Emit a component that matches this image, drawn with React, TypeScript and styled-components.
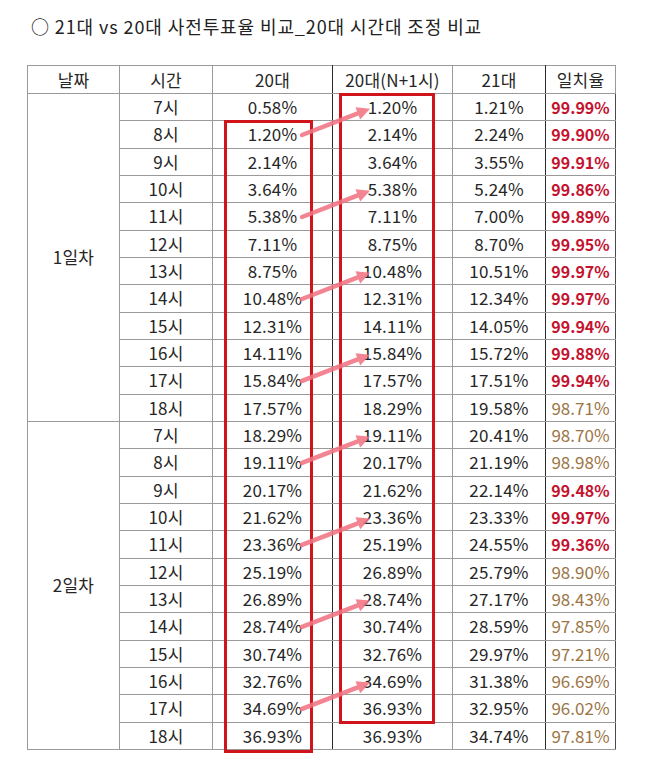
import React from "react";
import styled, { createGlobalStyle } from "styled-components";

const GlobalStyle = createGlobalStyle`
  body {
    margin: 0;
    background: #ffffff;
    font-family: "Noto Sans CJK KR", "Noto Sans", sans-serif;
    color: #222222;
  }
`;

type Row = [string, string, string, string, string];

const day1: Row[] = [
  ["7시", "0.58%", "1.20%", "1.21%", "99.99%"],
  ["8시", "1.20%", "2.14%", "2.24%", "99.90%"],
  ["9시", "2.14%", "3.64%", "3.55%", "99.91%"],
  ["10시", "3.64%", "5.38%", "5.24%", "99.86%"],
  ["11시", "5.38%", "7.11%", "7.00%", "99.89%"],
  ["12시", "7.11%", "8.75%", "8.70%", "99.95%"],
  ["13시", "8.75%", "10.48%", "10.51%", "99.97%"],
  ["14시", "10.48%", "12.31%", "12.34%", "99.97%"],
  ["15시", "12.31%", "14.11%", "14.05%", "99.94%"],
  ["16시", "14.11%", "15.84%", "15.72%", "99.88%"],
  ["17시", "15.84%", "17.57%", "17.51%", "99.94%"],
  ["18시", "17.57%", "18.29%", "19.58%", "98.71%"],
];

const day2: Row[] = [
  ["7시", "18.29%", "19.11%", "20.41%", "98.70%"],
  ["8시", "19.11%", "20.17%", "21.19%", "98.98%"],
  ["9시", "20.17%", "21.62%", "22.14%", "99.48%"],
  ["10시", "21.62%", "23.36%", "23.33%", "99.97%"],
  ["11시", "23.36%", "25.19%", "24.55%", "99.36%"],
  ["12시", "25.19%", "26.89%", "25.79%", "98.90%"],
  ["13시", "26.89%", "28.74%", "27.17%", "98.43%"],
  ["14시", "28.74%", "30.74%", "28.59%", "97.85%"],
  ["15시", "30.74%", "32.76%", "29.97%", "97.21%"],
  ["16시", "32.76%", "34.69%", "31.38%", "96.69%"],
  ["17시", "34.69%", "36.93%", "32.95%", "96.02%"],
  ["18시", "36.93%", "36.93%", "34.74%", "97.81%"],
];

const HEAD_H = 28;
const ROW_H = 27.33;
const arrowRows = [1, 4, 7, 10, 13, 16, 19, 22];

const Page = styled.div`
  padding: 14px 0 40px 0;
`;

const Title = styled.h1`
  margin: 0;
  padding-left: 31px;
  font-size: 18px;
  line-height: 24px;
  font-weight: 400;
  letter-spacing: 0.9px;
  color: #222;
`;

const TableWrap = styled.div`
  position: relative;
  width: 588px;
  margin: 27px 0 0 27px;
`;

const Table = styled.table`
  border-collapse: collapse;
  table-layout: fixed;
  width: 588px;
  border: 1px solid #4a4a4a;
  font-size: 17px;
`;

const HeadRow = styled.tr`
  height: ${HEAD_H}px;
`;

const BodyRow = styled.tr`
  height: ${ROW_H}px;
`;

const Cell = styled.td<{ $darkRight?: boolean }>`
  padding: 0;
  text-align: center;
  vertical-align: middle;
  line-height: 20px;
  border: 1px solid #9a9a9a;
  border-right-color: ${(p) => (p.$darkRight ? "#2a2a2a" : "#9a9a9a")};
  color: #262626;
  white-space: nowrap;
  letter-spacing: 0.2px;
`;

const HeadCell = styled(Cell).attrs({ as: "th" })`
  font-weight: 400;
`;

const RateCell = styled(Cell)<{ $hi: boolean }>`
  color: ${(p) => (p.$hi ? "#c4122f" : "#9b7546")};
  font-weight: ${(p) => (p.$hi ? 700 : 400)};
  font-size: ${(p) => (p.$hi ? 16 : 17)}px;
  letter-spacing: 0;
  border-right-color: #4a4a4a;
`;

const RedBox = styled.div<{ $left: number; $top: number; $w: number; $h: number }>`
  position: absolute;
  left: ${(p) => p.$left}px;
  top: ${(p) => p.$top}px;
  width: ${(p) => p.$w}px;
  height: ${(p) => p.$h}px;
  box-sizing: border-box;
  border: 3px solid #d0141c;
  pointer-events: none;
`;

const ArrowLayer = styled.svg`
  position: absolute;
  left: 0;
  top: 0;
  overflow: visible;
  pointer-events: none;
`;

const center = (i: number) => HEAD_H + ROW_H * (i + 0.5);

const Arrow = ({ row }: { row: number }) => {
  const x1 = 275;
  const y1 = center(row) + 1;
  const x2 = 343;
  const y2 = center(row - 1) + 2;
  const dx = x2 - x1;
  const dy = y2 - y1;
  const len = Math.hypot(dx, dy);
  const ux = dx / len;
  const uy = dy / len;
  const headLen = 13;
  const headW = 6.5;
  const bx = x2 - ux * headLen;
  const by = y2 - uy * headLen;
  const pts = [
    `${x2},${y2}`,
    `${bx - uy * headW},${by + ux * headW}`,
    `${bx + uy * headW},${by - ux * headW}`,
  ].join(" ");
  return (
    <g fill="#f27483" stroke="#f27483" opacity={0.88}>
      <line x1={x1} y1={y1} x2={bx + ux * 2} y2={by + uy * 2} strokeWidth={4.5} strokeLinecap="round" />
      <polygon points={pts} stroke="none" />
    </g>
  );
};

const DataRows = ({ label, rows }: { label: string; rows: Row[] }) => (
  <>
    {rows.map((r, i) => (
      <BodyRow key={label + r[0]}>
        {i === 0 && <Cell rowSpan={rows.length}>{label}</Cell>}
        <Cell>{r[0]}</Cell>
        <Cell $darkRight>{r[1]}</Cell>
        <Cell>{r[2]}</Cell>
        <Cell $darkRight>{r[3]}</Cell>
        <RateCell $hi={parseFloat(r[4]) >= 99}>{r[4]}</RateCell>
      </BodyRow>
    ))}
  </>
);

const App = () => (
  <Page>
    <GlobalStyle />
    <Title>○ 21대 vs 20대 사전투표율 비교_20대 시간대 조정 비교</Title>
    <TableWrap>
      <Table>
        <colgroup>
          <col style={{ width: 92 }} />
          <col style={{ width: 93 }} />
          <col style={{ width: 120 }} />
          <col style={{ width: 120 }} />
          <col style={{ width: 93 }} />
          <col style={{ width: 70 }} />
        </colgroup>
        <thead>
          <HeadRow>
            <HeadCell>날짜</HeadCell>
            <HeadCell>시간</HeadCell>
            <HeadCell $darkRight>20대</HeadCell>
            <HeadCell>20대(N+1시)</HeadCell>
            <HeadCell $darkRight>21대</HeadCell>
            <HeadCell>일치율</HeadCell>
          </HeadRow>
        </thead>
        <tbody>
          <DataRows label="1일차" rows={day1} />
          <DataRows label="2일차" rows={day2} />
        </tbody>
      </Table>
      <RedBox $left={197} $top={55} $w={89} $h={633} />
      <RedBox $left={312} $top={28} $w={96} $h={631} />
      <ArrowLayer width={588} height={700}>
        {arrowRows.map((r) => (
          <Arrow key={r} row={r} />
        ))}
      </ArrowLayer>
    </TableWrap>
  </Page>
);

export default App;
